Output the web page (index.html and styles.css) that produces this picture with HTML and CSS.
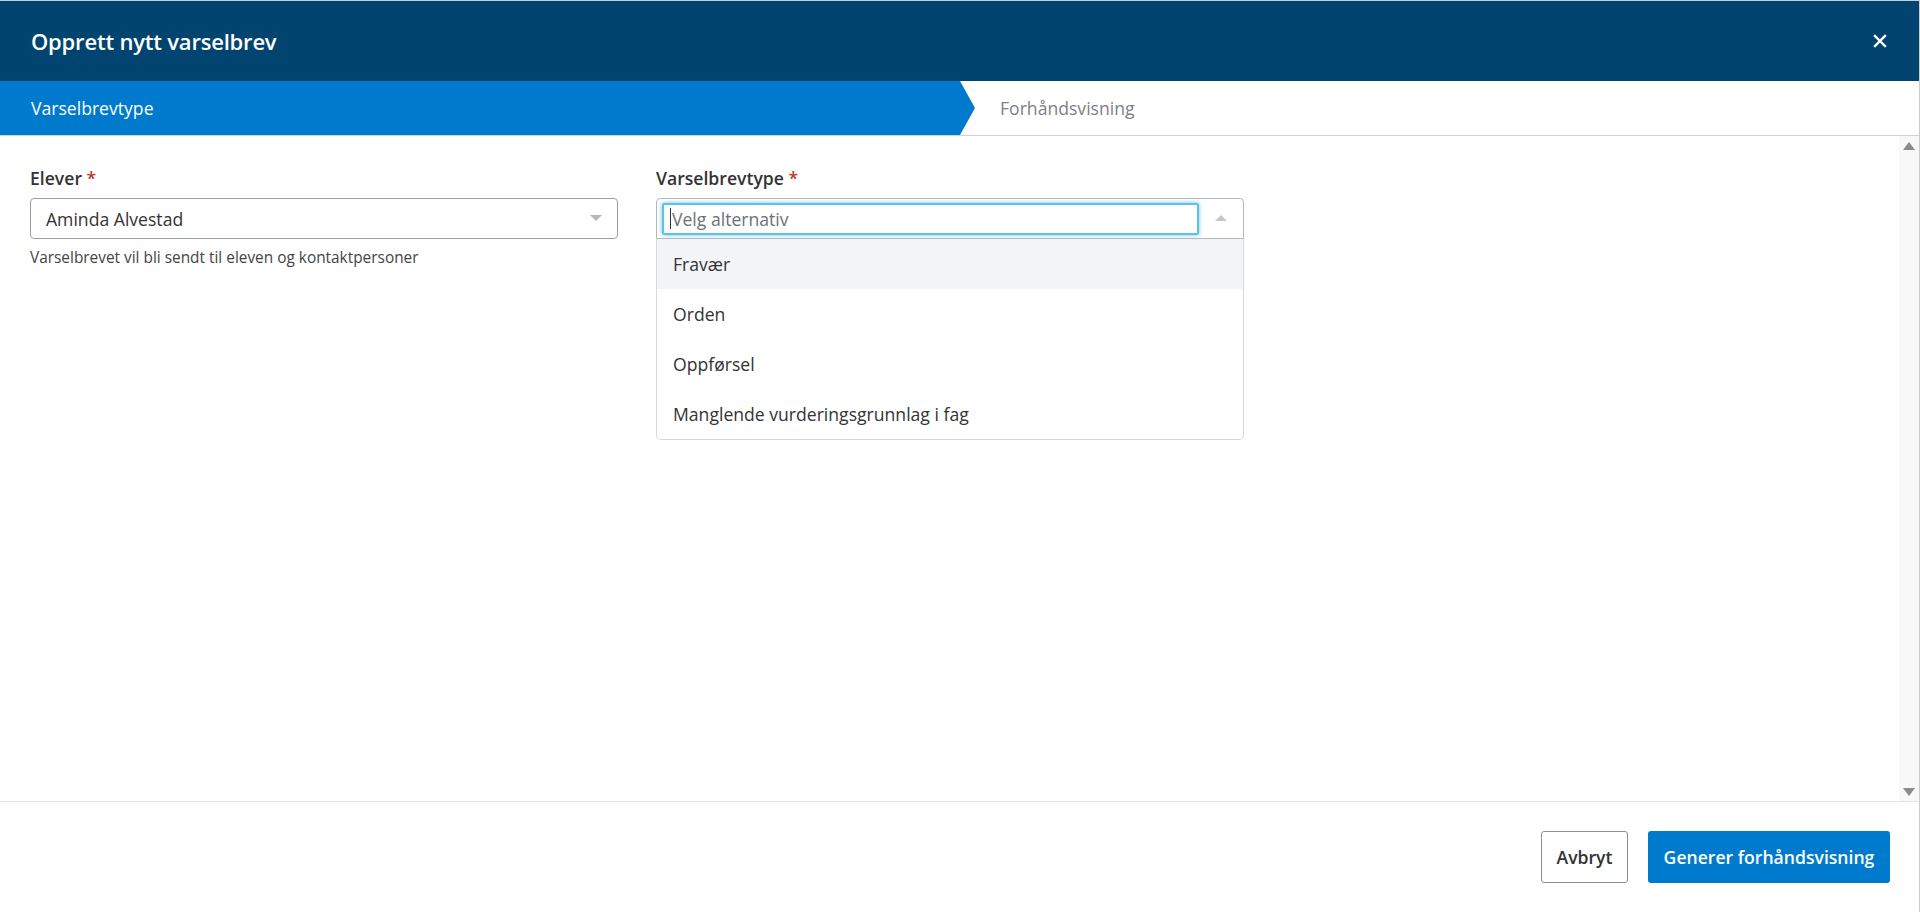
FILE: index.html
```html
<!DOCTYPE html>
<html lang="no">
<head>
    <meta charset="UTF-8">
    <meta name="viewport" content="width=device-width, initial-scale=1.0">
    <title>Opprett nytt varselbrev</title>
    <link rel="stylesheet" href="styles.css">
</head>
<body>

<div class="modal">
    <div class="modal-header">
        <h1>Opprett nytt varselbrev</h1>
        <button class="close-btn" aria-label="Lukk">
            <svg width="14" height="14" viewBox="0 0 14 14"><path d="M2 2 L12 12 M12 2 L2 12" stroke="#fff" stroke-width="2.4" stroke-linecap="square"/></svg>
        </button>
    </div>

    <div class="steps">
        <div class="step active">Varselbrevtype</div>
        <div class="step">Forhåndsvisning</div>
    </div>

    <div class="modal-body">
        <div class="body-content">
            <div class="field">
                <label>Elever <span class="req">*</span></label>
                <div class="select">
                    <span>Aminda Alvestad</span>
                    <span class="caret down"></span>
                </div>
                <p class="hint">Varselbrevet vil bli sendt til eleven og kontaktpersoner</p>
            </div>

            <div class="field">
                <label>Varselbrevtype <span class="req">*</span></label>
                <div class="select open">
                    <div class="search"><span class="cursor"></span>Velg alternativ</div>
                    <span class="caret up"></span>
                </div>
                <ul class="options">
                    <li class="hover">Fravær</li>
                    <li>Orden</li>
                    <li>Oppførsel</li>
                    <li>Manglende vurderingsgrunnlag i fag</li>
                </ul>
            </div>
        </div>
        <!-- scrollbar of the body pane -->
        <div class="scrollbar">
            <span class="arrow arrow-up"></span>
            <span class="arrow arrow-down"></span>
        </div>
    </div>

    <div class="modal-footer">
        <button class="btn btn-secondary">Avbryt</button>
        <button class="btn btn-primary">Generer forhåndsvisning</button>
    </div>
</div>

</body>
</html>
```

FILE: styles.css
```css
* {
    box-sizing: border-box;
}
body {
    margin: 0;
    font-family: "Open Sans", Arial, sans-serif;
    color: #333;
    background: #fff;
}
.modal {
    width: 1920px;
    height: 912px;
    display: flex;
    flex-direction: column;
    border-top: 1px solid #c9ccd0;
    border-right: 1px solid #c9ccd0;
}
.modal-header {
    height: 80px;
    background-color: #00446f;
    display: flex;
    align-items: center;
    justify-content: space-between;
    padding: 0 32px 0 31px;
}
.modal-header h1 {
    margin: 0;
    color: #fff;
    font-size: 22px;
    font-weight: 600;
    letter-spacing: -0.2px;
}
.close-btn {
    background: none;
    border: none;
    padding: 0;
    cursor: pointer;
    display: flex;
}
.steps {
    height: 55px;
    display: flex;
    border-bottom: 1px solid #d0d3d6;
}
.step {
    display: flex;
    align-items: center;
    font-size: 17.6px;
    color: #7b8087;
    padding-left: 25px;
    flex: 1;
}
.step.active {
    flex: 0 0 975px;
    padding-left: 31px;
    color: #fff;
    background-color: #007acc;
    clip-path: polygon(0 0, 960px 0, 975px 50%, 960px 100%, 0 100%);
}
.modal-body {
    flex: 1;
    display: flex;
    min-height: 0;
}
.body-content {
    flex: 1;
    display: flex;
    align-items: flex-start;
    gap: 38px;
    padding: 30px 30px 0;
}
.field {
    width: 588px;
    flex-shrink: 0;
}
.field label {
    display: block;
    font-size: 17.6px;
    font-weight: 600;
    line-height: 24px;
    color: #333;
    margin-bottom: 8px;
}
.req {
    color: #c0392b;
}
.select {
    position: relative;
    height: 41px;
    border: 1px solid #9aa0a6;
    border-radius: 4px;
    display: flex;
    align-items: center;
    padding: 0 15px;
    font-size: 17.6px;
    color: #333;
}
.select.open {
    border-color: #b5b9be;
    border-radius: 4px 4px 0 0;
    padding: 0 5px;
}
.search {
    width: 537px;
    height: 32px;
    border: 2px solid #5bc4e6;
    border-radius: 2px;
    box-shadow: 0 0 4px rgba(40, 170, 220, 0.7);
    display: flex;
    align-items: center;
    padding-left: 6px;
    color: #6b7079;
}
.cursor {
    width: 1px;
    height: 21px;
    background: #333;
    margin-right: 1px;
}
.caret {
    position: absolute;
    right: 15px;
    top: 16px;
    width: 0;
    height: 0;
    border-left: 6px solid transparent;
    border-right: 6px solid transparent;
}
.caret.down {
    border-top: 6px solid #b4b8bc;
}
.caret.up {
    right: 16px;
    top: 16px;
    border-bottom: 6px solid #c3c6ca;
}
.hint {
    margin: 8px 0 0;
    font-size: 15.4px;
    color: #444;
}
.options {
    list-style: none;
    margin: 0;
    padding: 0;
    border: 1px solid #d5d8dc;
    border-top: none;
    border-radius: 0 0 5px 5px;
}
.options li {
    height: 50px;
    display: flex;
    align-items: center;
    padding-left: 16px;
    font-size: 17.6px;
    color: #333;
}
.options li.hover {
    background-color: #f3f4f6;
}
.scrollbar {
    width: 20px;
    background-color: #f8f8f8;
    display: flex;
    flex-direction: column;
    justify-content: space-between;
    align-items: center;
    padding: 6px 0 5px;
}
.arrow {
    width: 0;
    height: 0;
    border-left: 6px solid transparent;
    border-right: 6px solid transparent;
}
.arrow-up {
    border-bottom: 8px solid #8a8a8a;
}
.arrow-down {
    border-top: 8px solid #8a8a8a;
}
.modal-footer {
    height: 111px;
    border-top: 1px solid #e3e5e8;
    display: flex;
    align-items: center;
    justify-content: flex-end;
    gap: 20px;
    padding-right: 29px;
}
.btn {
    height: 52px;
    font-family: "Open Sans", Arial, sans-serif;
    font-size: 17.6px;
    font-weight: 600;
    border-radius: 3px;
    cursor: pointer;
}
.btn-secondary {
    width: 87px;
    background: #fff;
    color: #333;
    border: 1px solid #8c9096;
}
.btn-primary {
    width: 242px;
    background-color: #007acc;
    color: #fff;
    border: none;
}
```
